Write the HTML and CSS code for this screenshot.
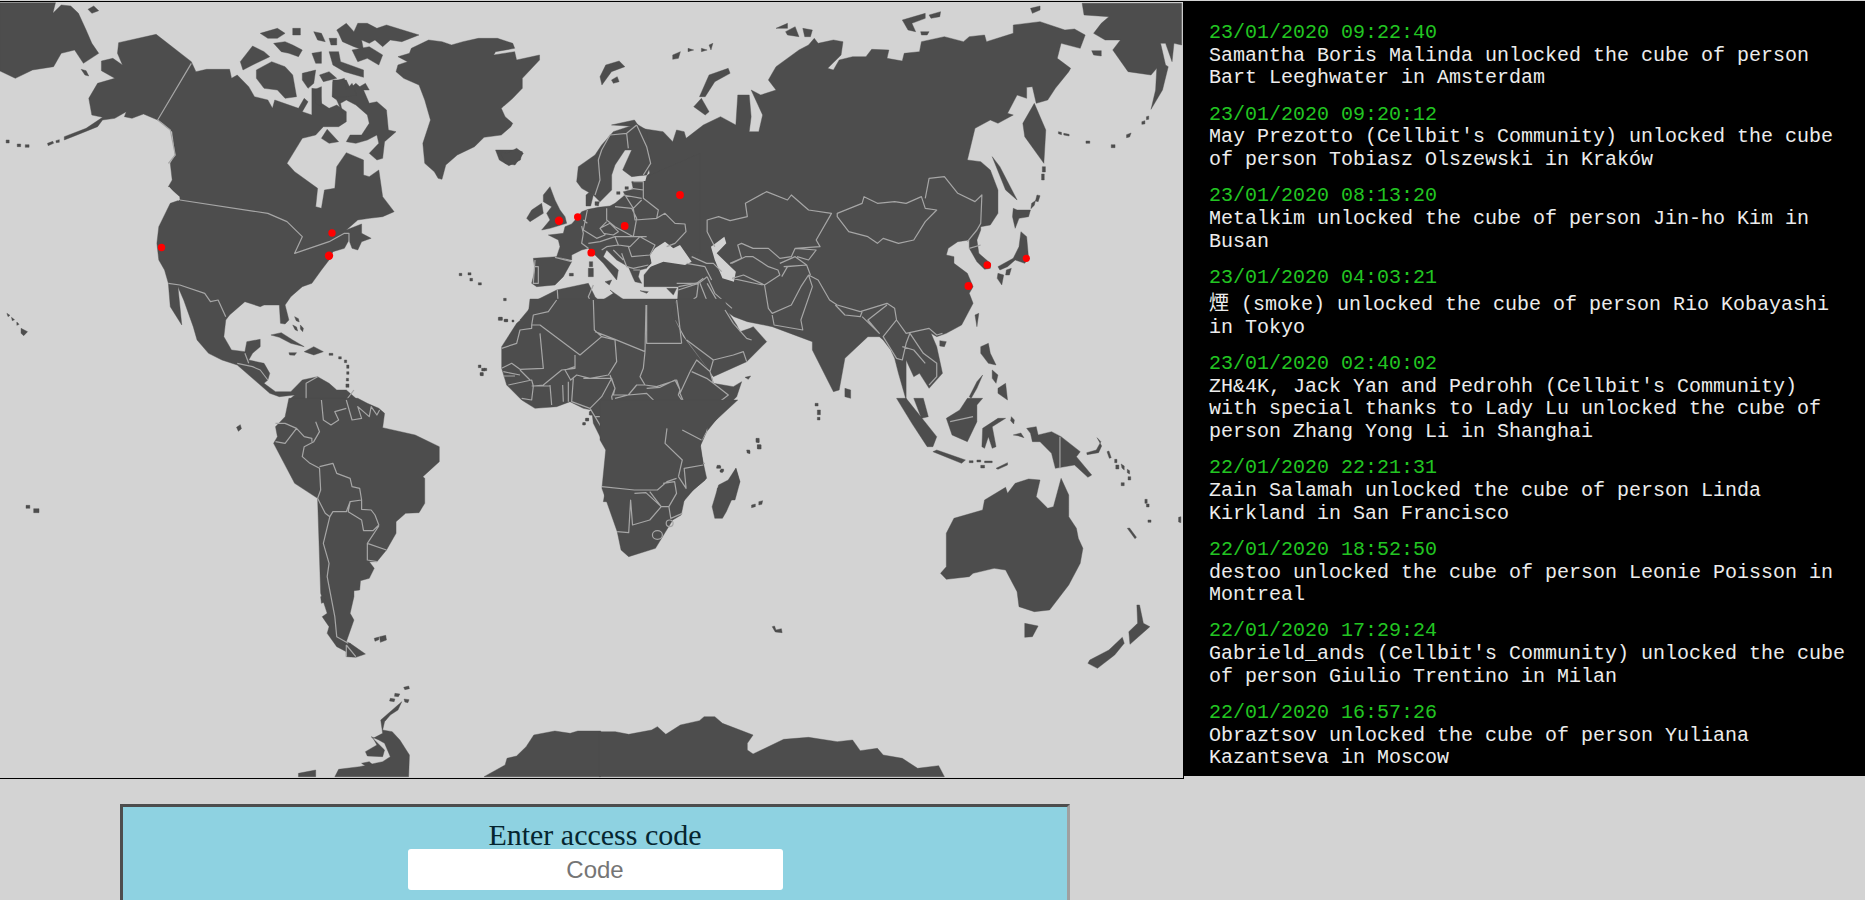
FILE: index.html
```html
<!DOCTYPE html>
<html lang="en">
<head>
<meta charset="utf-8">
<title>Cube map</title>
<link rel="stylesheet" href="styles.css">
</head>
<body>
<div class="top">
<div class="map">
<svg class="world" viewBox="0 2 1183 776" width="1183" height="776" role="img" aria-label="World map">
<g class="q1" transform="scale(.38265,.33333)">
<path class="land" d="M0,8L145,8L138,40L160,15L185,18L205,40L225,90L240,130L258,160L218,190L195,150L160,160L140,200L85,210L40,235L0,213Z"/>
<path class="land" d="M230,28L245,18L258,32L240,40ZM212,208L225,212L232,228L222,225Z"/>
<path class="land" d="M310,128L408,103L500,185L512,215L540,208L600,208L605,235L620,225L650,260L665,290L700,300L712,325L718,300L780,325L795,295L805,305L790,335L815,345L815,265L835,268L840,310L860,325L880,315L905,335L905,365L885,380L845,380L825,405L790,415L750,490L770,515L830,565L825,620L840,625L848,570L875,565L880,500L905,458L950,480L950,525L965,530L990,510L1000,590L1030,635L1000,650L965,655L935,660L905,690L945,672L945,700L970,715L945,725L935,750L920,745L912,720L900,745L870,755L860,780L840,810L815,850L790,860L760,890L745,915L755,960L745,972L733,970L730,915L690,915L680,920L640,905L600,945L590,960L585,1010L605,1050L640,1055L645,1025L680,1018L680,1040L660,1060L650,1080L690,1090L705,1120L700,1140L690,1150L720,1175L760,1175L790,1140L830,1130L860,1150L880,1170L905,1170L935,1200L755,1200L770,1185L730,1190L705,1180L675,1150L620,1095L580,1080L545,1060L515,1020L505,980L480,900L465,860L475,975L445,920L440,850L430,810L415,780L410,730L415,680L445,610L470,600L470,590L440,560L450,540L445,490L458,465L450,395L425,370L412,360L375,342L345,355L325,350L330,335L300,355L268,360L255,380L190,410L168,420L168,410L225,385L268,352L240,345L232,295L255,250L300,235L265,212L265,183L295,175L320,195L307,160Z"/>
<path class="land" d="M870,240L905,240L915,265L930,250L950,270L965,310L985,305L1010,330L1015,390L1035,395L1005,425L1000,475L985,480L965,460L990,430L985,405L960,420L930,430L905,425L915,405L945,405L965,370L960,345L930,315L905,300L890,310L895,340L880,300L868,290Z"/>
<path class="land" d="M840,415L855,388L885,425L860,430ZM670,210L710,185L745,200L765,225L775,290L745,295L725,270L690,265L670,235ZM628,185L660,138L690,155L705,170L660,195L635,210ZM880,90L905,70L925,95L935,70L960,70L985,85L1010,75L1095,105L1050,125L1020,120L1000,140L980,120L965,130L945,120L950,150L925,140L895,125L885,100ZM680,100L725,85L745,100L725,115L700,115ZM765,85L785,85L785,105L765,105ZM715,130L745,125L765,135L790,150L780,170L755,160L735,155ZM820,95L840,100L850,125L830,120ZM860,115L880,115L880,135L865,135ZM815,160L840,155L840,190L825,190ZM860,155L885,155L890,185L950,210L950,232L900,215L870,195ZM790,220L825,210L820,250L805,265L790,240ZM835,225L860,215L880,235L845,245ZM870,245L900,235L905,270L920,250L932,285L905,290L870,290ZM820,270L840,260L840,320L825,310ZM940,260L955,250L965,270L945,270ZM920,150L965,140L1000,165L990,195L960,175L935,185Z"/>
<path class="land" d="M1075,145L1120,120L1155,125L1180,135L1210,125L1250,115L1300,115L1340,130L1345,145L1295,155L1290,165L1345,155L1350,180L1410,165L1410,180L1365,235L1365,265L1340,295L1310,325L1320,350L1340,370L1335,380L1310,405L1265,412L1240,440L1195,465L1165,495L1155,538L1145,535L1135,515L1110,490L1105,430L1125,360L1110,300L1095,255L1055,235L1035,215L1040,195L1065,185L1040,170L1070,160Z"/>
<path class="sea" d="M1315,320L1340,318L1345,335L1330,345L1320,335ZM1100,355L1112,355L1110,372L1098,368Z"/>
<path class="land" d="M1295,450L1340,450L1365,455L1360,480L1330,497L1305,480Z"/>
<path class="land" d="M55,985L72,995L62,1007L55,1000ZM708,1005L735,998L765,1020L795,1040L760,1030L730,1012ZM795,1055L820,1040L845,1055L820,1065ZM755,1058L775,1058L770,1066L757,1065Z"/>
<path class="land" d="M16,420h8v9h-8ZM45,432h9v8h-9ZM66,434h10v8h-10ZM124,430l14,-6l2,6l-14,7ZM146,422l9,-3v8l-8,1ZM18,940l8,6l-5,4ZM30,952l8,7l-6,3ZM44,966l6,7l-6,3ZM1200,820h7v7h-7ZM1223,818h8v7h-8ZM1228,835h7v8h-7ZM1250,848h8v7h-8ZM1316,895h7v7h-7ZM1304,952h8v8h-8ZM1320,958h7v7h-7ZM1338,960h5v6h-5ZM1250,1095h7v8h-7ZM1265,1105h7v7h-7ZM1256,1118h7v9h-7ZM860,1060h10v6h-10ZM885,1070h7v7h-7ZM900,1080h6v8h-6ZM906,1095h6v10h-6ZM906,1115h6v8h-6ZM905,1135h6v8h-6ZM904,1152h8v10h-8ZM770,950l10,6l2,10l-8,-4ZM765,975l10,6l3,12l-7,-4ZM785,975l8,10l-2,10l-6,-8Z"/>
<path class="line" d="M500,190L412,360L445,390L458,465L440,490M470,600L700,640L750,665L790,710L770,760L860,725L900,700L912,700L912,725M440,850L470,855L535,880L550,905L570,900L590,950M640,1060L650,1090M620,1090L660,1100L680,1110L700,1140M800,1200L800,1150L830,1130M905,1200L925,1170"/>
<path class="cut" d="M440,562L468,600M428,490L426,525"/>
</g>
<g class="q2" transform="translate(600,0) scale(.38265,.33333)">
<path class="land" d="M100,380L30,375L90,360L105,385L165,395L190,425L200,390L220,395L225,415L270,375L315,350L355,375L360,285L390,285L395,350L390,395L415,395L425,345L395,270L420,285L460,270L440,240L460,200L520,150L545,135L560,115L570,130L610,120L635,125L630,165L595,205L610,210L625,180L660,170L695,170L710,148L755,150L750,175L790,183L795,160L835,155L840,125L900,110L950,125L965,110L1005,105L1010,125L1080,100L1080,75L1150,65L1215,90L1240,87L1268,105L1255,145L1205,130L1195,175L1230,205L1225,215L1190,265L1170,300L1140,310L1130,260L1115,262L1115,295L1090,285L1065,340L1080,345L1040,370L1020,360L980,385L960,480L995,485L1020,510L1040,570L1040,640L1020,675L995,680L995,690L985,720L990,760L1020,790L1020,805L1005,808L985,785L965,745L965,720L935,725L910,745L905,765L925,770L925,790L960,820L975,860L965,880L975,910L945,975L905,1000L880,1010L865,1000L880,1040L895,1120L860,1165L835,1120L820,1130L800,1080L800,1200L780,1120L770,1075L760,1050L740,1020L730,1010L700,1010L640,1075L625,1170L610,1175L555,1050L555,1025L520,1010L450,980L385,965L350,950L325,930L200,945L205,860L115,860L115,825L140,790L150,730L110,540L130,520L115,430Z"/>
<path class="sea" d="M290,740L325,710L330,730L305,760L355,815L350,845L320,835L300,780Z"/>
<path class="land" d="M1260,10L1520,10L1520,135L1500,130L1495,185L1478,130L1465,130L1478,195L1485,200L1470,270L1440,328L1452,270L1455,205L1440,225L1380,215L1340,150L1360,120L1320,120L1290,100L1310,70L1330,50L1265,45Z"/>
<path class="land" d="M1135,310L1165,390L1160,490L1110,410L1105,370ZM1025,470L1045,500L1090,600L1060,570ZM1080,625L1090,630L1125,630L1120,650L1095,655L1085,685L1078,650ZM1100,695L1115,710L1120,775L1110,790L1085,780L1065,800L1045,810L1040,800L1080,775L1095,740ZM1040,820L1055,825L1050,855L1038,835ZM1062,810L1075,805L1070,825L1060,825ZM980,945L990,940L985,980ZM888,1022L905,1025L900,1040L888,1038ZM995,1040L1015,1030L1020,1060L1035,1095L1015,1090L995,1060ZM1040,1165L1060,1150L1065,1200L1040,1180ZM1025,1110L1040,1125L1035,1150L1025,1135ZM985,1145L1000,1125L985,1165L970,1195L965,1190ZM640,1165L655,1170L655,1195L640,1190Z"/>
<path class="land" d="M260,290L285,225L335,205L340,220L300,245L275,290ZM245,320L265,295L285,335L275,345ZM0,230L15,195L50,183L65,200L30,215L5,255ZM30,240L45,230L50,245L35,250ZM190,165L210,155L205,175L190,178ZM230,145L245,150L230,155ZM265,145L280,150L265,155ZM285,135L295,130L290,150ZM460,85L490,70L490,85ZM485,95L510,80L520,110L490,105ZM530,85L555,90L550,110L535,110ZM790,60L850,40L850,55L815,70L825,95L805,90ZM860,45L890,35L888,50L865,55ZM838,95L860,95L855,105L840,105ZM1125,25L1150,18L1150,30L1130,40ZM1285,152L1310,152L1310,168L1290,165Z"/>
<path class="land" d="M1198,395l8,2v7l-8,-3ZM1212,400l14,3v5l-14,-3ZM1270,423h10v7h-10ZM1336,434h10v9h-10ZM1376,404l12,-5l-4,12l-8,2ZM1416,365l8,-3v10l-8,1ZM1428,350l6,-2v10l-6,1ZM1156,500h8v16h-8ZM1154,522h7v18h-7ZM1142,585l8,2l-5,18l-7,-2ZM1128,610l10,-8l-3,14l-9,10Z"/>
<path class="line" d="M300,740L280,695L280,660L310,650L340,662L385,650L380,610L435,575L490,600L500,585L545,630L605,640L565,720L575,740L510,745L500,770L470,775L440,745L400,745L370,730L360,735L370,775L340,790M620,640L685,610L690,590L725,610L770,605L800,610L840,590L850,625L880,630L850,665L820,720L780,730L740,715L725,730L700,710L650,695L620,650ZM850,595L860,535L900,530L935,580L980,605L998,585L995,670L985,690L960,725M965,745L995,735M345,790L380,770L400,770L440,800L465,810L470,825L430,855L375,825L345,835M470,790L510,770L540,795L490,800L475,830M510,745L565,750L545,780L515,770M480,800L540,795L550,825M430,855L440,925L450,940L500,915L525,860L545,825L570,840L600,900L620,915L680,935L750,910L770,925L775,960L800,1000L860,985L880,1005L895,1000M545,825L555,860L525,960L530,990L455,975L450,945M280,830L300,880L345,925M345,835L425,855M615,915L640,945L680,950L685,935M685,950L730,1000L700,960L750,915M775,960L740,1010L775,1075L790,1080L800,1030L810,1000M810,1000L845,1060L880,1090L880,1130L860,1155M790,1040L820,1050L850,1090M205,860L260,848L280,830M205,945L225,910L260,915L305,945M280,850L300,890L320,930"/>
</g>
<g class="q3" transform="translate(0,400) scale(.38265,.33333)">
<path class="land" d="M755,-5L745,50L720,80L725,110L715,130L770,250L830,295L838,580L855,640L842,650L860,680L855,700L880,740L905,755L915,730L955,762L930,772L905,770L905,755L915,730L905,725L925,660L915,640L925,590L925,572L940,570L942,542L965,535L978,505L965,485L985,485L1010,450L1035,400L1035,365L1060,340L1095,338L1110,310L1110,235L1105,230L1148,185L1148,140L1085,105L1000,83L1005,40L990,25L960,10L935,-5Z"/>
<path class="land" d="M838,590L848,585L850,605L840,610ZM978,715l12,-4v8l-10,5ZM992,710l16,-4l2,14l-16,7ZM1055,862l13,-4l2,8l-12,3ZM1032,880l13,2l-4,8l-10,-1ZM1020,895l12,2l-2,8l-12,-2ZM1056,897l13,2l-3,9l-8,-2ZM618,82l10,-8l3,12l-8,8ZM68,316h10v9h-10ZM88,326h14v12h-14ZM1540,35h10v10h-10ZM1530,55h8v8h-8ZM1524,68h6v6h-6Z"/>
<path class="land" d="M1050,905L1040,930L1020,945L1005,965L1000,990L1025,995L1045,1020L1070,1065L1068,1130L875,1130L885,1108L940,1100L1000,1085L1020,1070L1005,1030L990,1020L970,1010L1005,1050L1000,1070L960,1068L955,1055L985,1035L975,1015L1000,1000L995,960L1040,915ZM780,1120L825,1110L825,1130L780,1130ZM945,1090L965,1085L975,1095L955,1098ZM1265,1130L1320,1095L1325,1075L1350,1068L1375,1040L1395,1005L1450,993L1490,1000L1510,993L1570,993L1570,1130Z"/>
<path class="line" d="M720,70L745,70L775,85L745,130L720,125M775,85L795,110L815,115L815,125M825,65L835,95L820,125L795,140L790,170L810,190L835,205L838,270L830,295L850,340L862,350L845,430L860,490L855,530L875,650L880,710L910,730M835,200L870,190L880,220L915,235L920,260L940,265L945,300L915,305L905,335L870,335L862,350M915,305L910,335L945,360L950,392L975,392L990,375L980,345L970,330L945,328L945,300M990,378L960,430L960,480L985,485M960,430L1010,450M905,735L905,770M905,735L930,770M840,0L845,60L865,75L885,60L875,35L905,25M905,0L920,60L945,55L935,20L965,50L970,20L985,45L992,30"/>
</g>
<g class="q8" transform="translate(500,120) scale(.33333)">
<path class="land" d="M100,415L170,410L215,425L190,470L165,495L110,500L95,490L105,450Z"/>
<path class="land" d="M235,140L285,105L305,75L340,35L410,12L440,30L455,130L440,165L395,170L368,150L395,90L375,90L345,135L335,165L335,210L300,245L280,225L245,205L230,185Z"/>
<path class="land" d="M145,345L190,340L195,320L215,312L230,295L245,275L265,268L295,262L330,258L345,250L375,225L370,215L400,208L395,185L440,170L600,100L600,400L480,370L465,400L450,405L455,430L440,445L420,450L415,470L425,490L405,485L400,475L385,440L350,420L320,390L310,410L355,450L350,480L310,430L280,400L265,385L245,390L215,405L215,420L170,410L180,380L175,360Z"/>
<path class="land" d="M258,225L270,215L280,225L272,258L258,258ZM285,245L298,245L295,258L285,256Z"/>
<path class="sea" d="M395,172L440,168L436,183L398,184ZM465,385L495,365L520,385L540,375L575,425L555,435L490,425L440,445L455,430L450,405Z"/>
<path class="land" d="M130,225L150,200L165,240L180,270L195,290L200,310L150,325L125,330L150,300L140,280L155,260L130,245ZM95,270L125,250L130,280L90,305L80,295ZM0,95L20,100L50,85L70,100L45,135L15,130ZM265,445L280,445L280,470L265,470ZM268,425L278,425L278,440L268,440ZM315,485L335,480L328,495ZM420,512L445,515L440,520ZM500,505L530,505L520,525ZM208,460h12v8h-12ZM350,215h10v8h-10ZM375,200h10v8h-10ZM380,220L395,215L390,230Z"/>
<path class="land" d="M60,600L110,540L170,510L240,495L265,490L285,530L300,545L340,520L330,510L380,545L440,550L470,545L525,550L530,600Z"/>
<path class="line" d="M410,15L380,40L330,45L305,90L295,120L300,180L285,225M380,40L385,85M410,15L440,80L452,130L430,165M400,185L430,185L430,235L475,270L470,295L495,280L525,310L555,312L558,335L525,370L500,380M370,225L425,235M395,205L430,210M375,225L400,265L425,240M400,265L405,300L470,295M320,265L320,300L345,320L400,350L410,295L395,265L345,260M262,270L250,330L290,355L315,345L300,325L320,305M300,325L330,310L355,335L340,345L310,340M245,318L250,340L245,370L265,385M265,370L300,365L345,350L355,375L320,380L305,390M345,350L400,350L440,350M355,375L390,380L420,350L465,375L450,405L395,410L385,380M340,390L370,420M365,400L380,440L400,445L445,435M400,450L420,450M250,300L262,310M105,420L100,490L115,490L115,440L105,440M165,412L215,425M575,410L620,430L640,430L665,455M560,430L615,440L635,480M530,490L590,490L610,475M600,490L620,540L670,575M535,510L595,490L590,530L540,570M172,510L175,560L125,580M280,495L265,530L285,570L283,600M385,545L440,600M440,550L440,600"/>
</g>
<g class="q9" transform="translate(480,300) scale(.33333)">
<path class="land" d="M150,-3L590,-3L575,40L610,110L690,215L700,250L760,260L785,245L770,290L740,320L680,395L660,440L670,490L680,535L640,570L610,605L370,605L385,520L380,450L365,420L340,370L335,330L310,325L270,305L230,320L165,325L125,300L80,255L65,205L65,140L110,70L145,40Z"/>
<path class="land" d="M575,40L590,-3L735,-3L740,30L770,75L780,95L810,85L820,80L860,125L800,185L700,230L690,215L620,120Z"/>
<path class="land" d="M795,232L812,228L805,238ZM710,500l12,-2v7h-12ZM720,510l10,2l-3,6l-7,-2ZM800,450l10,3v8l-8,-2ZM828,416l9,2v10l-8,-2ZM832,434h10v12h-10ZM768,505L780,545L765,600L710,600L712,565L750,540Z"/>
<path class="land" d="M55,52h12v9h-12ZM72,58h10v7h-10ZM5,205h10v8h-10ZM0,218h9v8h-9ZM330,333h12v12h-12ZM318,355h8v7h-8ZM308,368h7v7h-7Z"/>
<path class="line" d="M340,0L343,90L365,110L300,165L180,75L155,75L160,45L205,35L230,0M65,145L110,130L120,90L155,85L155,75M180,100L190,205L120,208L95,190L65,205M285,165L285,205L245,210L190,255L160,258M365,110L405,120L410,185L385,225L330,235L290,225L272,240L255,210L285,200M345,95L405,118L495,155L498,15M500,15L500,130L605,130M495,155L490,205L480,230L495,255L530,260L590,240L600,270M390,225L405,265L400,285L445,285L470,255L495,255M405,295L445,285L500,280L540,320L440,320L420,335L400,320M500,265L540,262L585,240L600,270L595,285L615,315L600,330L540,322M630,215L650,180L690,215L700,250L680,235L635,215M630,215L600,280L615,315L680,335L745,285L700,250M680,335L680,395M615,315L605,380L665,420L680,395M575,330L610,330L605,380L570,385M440,320L420,390L385,440L420,445L430,460L470,455L490,495L555,520L540,470L570,465L555,400L575,340M555,380L575,380L570,425L555,425L555,400M570,465L610,490L660,440M540,470L595,480L590,530L555,550L530,565L475,550L475,510L495,495M380,445L370,560L470,570L475,510M595,480L610,495L675,490M620,520L600,560L590,530M470,570L500,570L530,600M280,235L275,305L330,325L365,290L395,235L310,235M330,325L345,350L400,350L420,335L400,320L395,290L405,265L395,235M345,350L375,400L365,415M405,355L405,400L380,425M248,255L250,305M265,245L265,305M210,255L215,315M85,255L155,240L160,258L155,300L125,295M120,210L150,240M70,215L120,225M70,228H105M155,258H210M605,130L590,0M620,120L700,180L690,215M700,180L760,165L790,155L800,185M735,30L760,70L800,115L815,120"/>
</g>
<g class="q4" transform="translate(600,400) scale(.38265,.33333)">
<path class="land" d="M0,0L360,0L280,85L262,130L275,240L222,290L212,345L190,360L145,445L75,470L55,450L45,395L5,265L15,150L0,120Z"/>
<path class="land" d="M355,205L365,245L330,335L320,355L300,355L293,320L310,255L335,240Z"/>
<path class="land" d="M1120,237L1150,240L1140,290L1170,325L1185,320L1205,235L1225,285L1225,350L1245,385L1250,415L1262,445L1255,490L1225,555L1175,630L1135,635L1095,620L1090,575L1060,510L1030,505L975,520L965,530L905,538L890,520L905,500L905,400L925,355L1000,330L1005,300L1060,262L1065,280L1085,250Z"/>
<path class="land" d="M1110,670L1145,678L1130,710L1110,712ZM1403,615L1410,615L1420,670L1437,680L1385,733L1382,695L1405,670ZM1365,712L1370,730L1345,765L1300,805L1275,790L1280,780L1330,750Z"/>
<path class="land" d="M-2,995L40,995L75,1003L135,990L150,980L172,1003L210,975L260,962L272,950L300,950L320,970L400,1005L385,1030L385,1050L400,1062L480,1018L545,1012L620,1025L660,1020L680,1052L725,1045L740,1065L790,1075L830,1105L885,1097L900,1130L-2,1130Z"/>
<path class="land" d="M1115,85L1140,80L1145,105L1180,95L1205,110L1255,155L1245,170L1285,225L1275,232L1240,195L1190,205L1180,160L1150,125L1130,125L1125,100ZM775,-5L800,-5L880,110L870,140L855,140L815,70ZM820,-5L845,-5L858,50L840,55ZM905,55L940,30L960,-5L1000,-5L985,15L985,65L960,125L920,105ZM870,155L880,150L955,180L945,190ZM1000,85L1040,55L1060,55L1025,80L1035,140L1025,145L1015,110L1005,145L998,140ZM1035,205L1065,188L1065,195L1040,208ZM1075,50l8,10l-2,12l-8,-10ZM1080,105l20,-6l8,14l-16,-6Z"/>
<path class="land" d="M1272,158l25,-8l12,-25l-10,-12l12,25l-8,20l-30,6ZM1325,155l5,-2l6,20l-5,2ZM1345,178h6v10h-6ZM1348,195h8v12h-8ZM1362,192l8,6v12l-6,-6ZM1378,208l6,4v10l-6,-4ZM1380,230h7v10h-7ZM1362,248h8v9h-8ZM1424,298h6v12h-6ZM1428,312h7v9h-7ZM1432,360h8v7h-8ZM1378,385l6,-1l18,28l-4,4ZM1512,352l6,-2v18l-6,-2ZM965,182h10v6h-10ZM985,180h10v6h-10ZM1005,183h20v5h-20ZM995,196h10v8h-10ZM408,115h8v12h-8ZM412,135h9v12h-9ZM385,150h6v8h-6ZM396,315l10,-3v8l-10,3ZM415,305l10,-3l-2,11l-8,2ZM306,196h8v7h-8ZM316,207h7v7h-7ZM450,680l6,-2l4,12l14,-4l2,12l-18,-2Z"/>
<path class="land" d="M562,10h8v8h-8ZM568,30h8v14h-8ZM568,52h7v8h-7Z"/>
<path class="line" d="M5,260L90,270L150,270L175,245L200,235M90,280L120,278L160,320L130,360L85,375L80,300L75,398L45,395M130,275L160,320L180,320L200,280L195,245L165,250M180,320L185,355L215,340M205,230L225,265L220,205L270,195M215,90L265,120M175,85L170,130L215,180L205,230M1202,110L1202,205M915,65L975,50"/>
<ellipse class="line" cx="150" cy="405" rx="13" ry="13"/>
<ellipse class="line" cx="182" cy="370" rx="9" ry="10"/>
</g>
<g class="pins">
<circle class="pin" cx="161.5" cy="247.5" r="3.7"/>
<circle class="pin" cx="332" cy="233" r="3.7"/>
<circle class="pin" cx="329" cy="255.7" r="4.2"/>
<circle class="pin" cx="559" cy="220.7" r="4.2"/>
<circle class="pin" cx="577.7" cy="217" r="3.7"/>
<circle class="pin" cx="624.7" cy="226" r="3.9"/>
<circle class="pin" cx="591.3" cy="252.7" r="3.9"/>
<circle class="pin" cx="680" cy="195" r="3.9"/>
<circle class="pin" cx="968.5" cy="286" r="4"/>
<circle class="pin" cx="987.3" cy="265" r="3.8"/>
<circle class="pin" cx="1026.3" cy="258.3" r="3.6"/>
</g>
</svg>
</div>
<div class="log">
<div class="entry"><div class="stamp">23/01/2020 09:22:40</div><div class="msg">Samantha Boris Malinda unlocked the cube of person Bart Leeghwater in Amsterdam</div></div>
<div class="entry"><div class="stamp">23/01/2020 09:20:12</div><div class="msg">May Prezotto (Cellbit's Community) unlocked the cube of person Tobiasz Olszewski in Kraków</div></div>
<div class="entry"><div class="stamp">23/01/2020 08:13:20</div><div class="msg">Metalkim unlocked the cube of person Jin-ho Kim in Busan</div></div>
<div class="entry"><div class="stamp">23/01/2020 04:03:21</div><div class="msg msg-tall">煙 (smoke) unlocked the cube of person Rio Kobayashi in Tokyo</div></div>
<div class="entry"><div class="stamp">23/01/2020 02:40:02</div><div class="msg">ZH&amp;4K, Jack Yan and Pedrohh (Cellbit's Community) with special thanks to Lady Lu unlocked the cube of person Zhang Yong Li in Shanghai</div></div>
<div class="entry"><div class="stamp">22/01/2020 22:21:31</div><div class="msg">Zain Salamah unlocked the cube of person Linda Kirkland in San Francisco</div></div>
<div class="entry"><div class="stamp">22/01/2020 18:52:50</div><div class="msg">destoo unlocked the cube of person Leonie Poisson in Montreal</div></div>
<div class="entry"><div class="stamp">22/01/2020 17:29:24</div><div class="msg">Gabrield_ands (Cellbit's Community) unlocked the cube of person Giulio Trentino in Milan</div></div>
<div class="entry"><div class="stamp">22/01/2020 16:57:26</div><div class="msg">Obraztsov unlocked the cube of person Yuliana Kazantseva in Moscow</div></div>
</div>
</div>
<form class="access">
<h2 class="access-title">Enter access code</h2>
<input class="access-input" type="text" placeholder="Code">
</form>
</body>
</html>
```
FILE: styles.css
```css
html, body {
  margin: 0;
  padding: 0;
  height: 900px;
  overflow: hidden;
  background: #d3d3d3;
}
body {
  padding-top: 1px;
  box-sizing: border-box;
}
.top {
  display: flex;
  align-items: flex-start;
}
.map {
  flex: none;
  width: 1183px;
  height: 776px;
  border-top: 1px solid #000;
  border-bottom: 1px solid #000;
  border-right: 1px solid #000;
}
.world {
  display: block;
  background: #d3d3d3;
}
.land {
  fill: #4d4d4d;
  stroke: #4d4d4d;
  stroke-width: .4;
  stroke-linejoin: round;
  vector-effect: non-scaling-stroke;
}
.sea { fill: #d3d3d3; stroke: none; }
.line {
  fill: none;
  stroke: #a6a6a6;
  stroke-width: 1.2;
  vector-effect: non-scaling-stroke;
  stroke-linejoin: round;
}
.cut {
  fill: none;
  stroke: #d3d3d3;
  stroke-width: 2;
  vector-effect: non-scaling-stroke;
}
.pin { fill: #ff0000; }
.log {
  flex: 1;
  height: 775px;
  box-sizing: border-box;
  overflow: hidden;
  background: #000;
  padding: 21px 16px 0 25px;
  font-family: "Liberation Mono", "Noto Sans CJK JP", monospace;
  font-size: 20px;
  line-height: 22.67px;
  color: #ececec;
}
.entry {
  margin-bottom: 13.6px;
}
.stamp {
  color: #22c522;
}
.msg-tall {
  margin-top: 4.5px;
}
.access {
  display: block;
  box-sizing: border-box;
  width: 950px;
  height: 120px;
  margin: 25px 0 0 120px;
  border: 3px solid #a0a0a0;
  border-top-color: #4d4d4d;
  border-left-color: #4d4d4d;
  background: #8ed2e1;
  text-align: center;
  padding-top: 13px;
}
.access-title {
  margin: 0;
  font-family: "Liberation Serif", serif;
  font-size: 30px;
  font-weight: normal;
  line-height: 29px;
  color: #05252f;
}
.access-input {
  display: block;
  box-sizing: border-box;
  width: 375px;
  height: 41px;
  margin: 0 auto;
  padding: 0;
  border: 0;
  border-radius: 3px;
  background: #fff;
  text-align: center;
  font-family: "Liberation Sans", sans-serif;
  font-size: 24px;
  color: #333;
}
.access-input::placeholder {
  color: #757575;
}
```
